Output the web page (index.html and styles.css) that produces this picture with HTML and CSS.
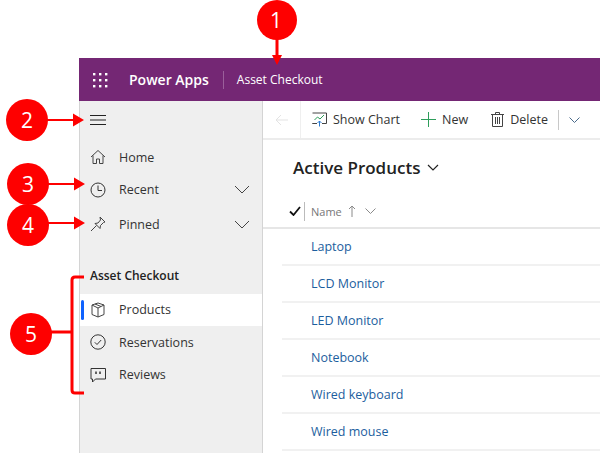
FILE: index.html
```html
<!DOCTYPE html>
<html lang="en">
<head>
    <meta charset="UTF-8">
    <title>Asset Checkout</title>
    <link rel="stylesheet" href="styles.css">
</head>
<body>
    <div class="page">
        <div class="app">
            <header class="topbar">
                <svg class="waffle" width="16" height="16" viewBox="0 0 16 16" fill="#fff">
                    <rect x="1" y="1" width="2.4" height="2.4"/><rect x="7" y="1" width="2.4" height="2.4"/><rect x="13" y="1" width="2.4" height="2.4"/>
                    <rect x="1" y="7" width="2.4" height="2.4"/><rect x="7" y="7" width="2.4" height="2.4"/><rect x="13" y="7" width="2.4" height="2.4"/>
                    <rect x="1" y="13" width="2.4" height="2.4"/><rect x="7" y="13" width="2.4" height="2.4"/><rect x="13" y="13" width="2.4" height="2.4"/>
                </svg>
                <span class="brand">Power Apps</span>
                <span class="appname">Asset Checkout</span>
            </header>
            <div class="main">
                <nav class="sidebar">
                    <div class="burger">
                        <svg width="16" height="12" viewBox="0 0 16 12" stroke="#222" fill="none"><path d="M0 1.5h16M0 6h16M0 10.5h16"/></svg>
                    </div>
                    <a class="navrow home">
                        <svg class="navicon" width="16" height="16" viewBox="0 0 16 16" fill="none" stroke="#444"><path d="M1 8l7-6.5L15 8M3 6.500V14.500h3.500V10h3v4.500H13V6.500"/></svg>
                        <span>Home</span>
                    </a>
                    <a class="navrow recent">
                        <svg class="navicon" width="16" height="16" viewBox="0 0 16 16" fill="none" stroke="#333"><circle cx="8" cy="8" r="7"/><path d="M8 3.500V8.500h4"/></svg>
                        <span>Recent</span>
                        <svg class="chevron" width="16" height="9" viewBox="0 0 16 9" fill="none" stroke="#444"><path d="M1 1l7 7 7-7"/></svg>
                    </a>
                    <a class="navrow pinned">
                        <svg class="navicon" width="16" height="16" viewBox="0 0 16 16" fill="none" stroke="#444"><path d="M10 1l5 5-1.500.5-3 3-.5 3L5 7.500l3-.5 2.500-3zM6.500 9.500L1 15"/></svg>
                        <span>Pinned</span>
                        <svg class="chevron" width="16" height="9" viewBox="0 0 16 9" fill="none" stroke="#444"><path d="M1 1l7 7 7-7"/></svg>
                    </a>
                    <div class="group">Asset Checkout</div>
                    <a class="navrow current">
                        <svg class="navicon" width="16" height="16" viewBox="0 0 16 16" fill="none" stroke="#444"><path d="M8 1l6 2v9.500L8 15l-6-2.500V3zM2 3l6 3 6-3M8 6v9M5 2l6 2.500"/></svg>
                        <span>Products</span>
                    </a>
                    <a class="navrow">
                        <svg class="navicon" width="16" height="16" viewBox="0 0 16 16" fill="none" stroke="#333"><circle cx="8" cy="8" r="7.200"/><path d="M4.800 8.300l2.200 2.200 4.200-4.500"/></svg>
                        <span>Reservations</span>
                    </a>
                    <a class="navrow">
                        <svg class="navicon" width="16" height="16" viewBox="0 0 16 16" fill="none" stroke="#333"><path d="M1 1.500h14.500v10.500H5.500L2.500 15v-3H1z"/><path d="M6 4.500v2.500M10 4.500v2.500" stroke-width="1.500"/></svg>
                        <span>Reviews</span>
                    </a>
                </nav>
                <section class="content">
                    <div class="toolbar">
                        <div class="backbox">
                            <svg width="14" height="12" viewBox="0 0 14 12" fill="none" stroke="#e3e3e3"><path d="M13 6H1M6 1L1 6l5 5"/></svg>
                        </div>
                        <button class="cmd chart">
                            <svg width="15" height="15" viewBox="0 0 15 15" fill="none">
                                <path d="M.5 1h14v10.500H10M5 11.500H.5z" stroke="#444"/>
                                <path d="M2.500 8l3-3 2.500 2 4-4" stroke="#2e9e5b"/>
                                <path d="M7.500 14.500V9M5.500 11l2-2 2 2" stroke="#2b7cd3"/>
                            </svg>
                            Show Chart
                        </button>
                        <button class="cmd new">
                            <svg width="15" height="15" viewBox="0 0 15 15" fill="none" stroke="#2e9e5b"><path d="M7.500 0v15M0 7.500h15"/></svg>
                            New
                        </button>
                        <button class="cmd delete">
                            <svg width="13" height="15" viewBox="0 0 13 15" fill="none" stroke="#444"><path d="M0 2.500h13M4.500 2.500V.5h4v2M1.500 2.500v12h10v-12M4.500 5v7M6.500 5v7M8.500 5v7"/></svg>
                            Delete
                        </button>
                        <span class="more">
                            <svg width="11" height="6" viewBox="0 0 11 6" fill="none" stroke="#4a6a8a"><path d="M.5.500l5 5 5-5"/></svg>
                        </span>
                    </div>
                    <div class="viewtitle">
                        <h1>Active Products</h1>
                        <svg width="12" height="7" viewBox="0 0 12 7" fill="none" stroke="#222" stroke-width="1.200"><path d="M1 1l5 5 5-5"/></svg>
                    </div>
                    <div class="gridhead">
                        <svg class="tick" width="12" height="10" viewBox="0 0 12 10" fill="none" stroke="#111" stroke-width="1.800"><path d="M1 5.500l3.500 3.500L11 1"/></svg>
                        <span class="headcell">Name</span>
                        <svg width="8" height="12" viewBox="0 0 8 12" fill="none" stroke="#8a8a8a"><path d="M4 12V1M1 4l3-3 3 3"/></svg>
                        <svg class="headchev" width="11" height="6" viewBox="0 0 11 6" fill="none" stroke="#8a8a8a"><path d="M.5.500l5 5 5-5"/></svg>
                    </div>
                    <ul class="rows">
                        <li><a>Laptop</a></li>
                        <li><a>LCD Monitor</a></li>
                        <li><a>LED Monitor</a></li>
                        <li><a>Notebook</a></li>
                        <li><a>Wired keyboard</a></li>
                        <li><a>Wired mouse</a></li>
                    </ul>
                </section>
            </div>
        </div>

        <!-- callouts on top of the screenshot -->
        <svg class="callouts" width="600" height="453" viewBox="0 0 600 453">
            <g fill="#fe0000">
                <circle cx="277" cy="20" r="20"/>
                <circle cx="27" cy="120" r="21"/>
                <circle cx="28" cy="184" r="21"/>
                <circle cx="28" cy="225" r="21"/>
                <circle cx="31" cy="334" r="21"/>
                <path d="M275.500 38h3v17h3.500l-5 10-5-10h3.500z"/>
                <path d="M47 119h26v-5.500l11 6.500-11 6.500V121H47z"/>
                <path d="M47 183h27v-5.500l11 6.500-11 6.500V185H47z"/>
                <path d="M47 222h27v-5.500l11 6.500-11 6.500V224H47z"/>
            </g>
            <path d="M84 277H75q-3 0-3 3v110q0 3 3 3H84M50 332H72" fill="none" stroke="#fe0000" stroke-width="3"/>
            <g class="num" fill="#fff" text-anchor="middle">
                <text x="276" y="28">1</text>
                <text x="27" y="128">2</text>
                <text x="28" y="192">3</text>
                <text x="28" y="233">4</text>
                <text x="31" y="342">5</text>
            </g>
        </svg>
    </div>
</body>
</html>
```

FILE: styles.css
```css
* {
    box-sizing: border-box;
}
html, body {
    margin: 0;
    background: #ffffff;
}
body {
    font-family: "Open Sans", "Noto Sans", sans-serif;
    font-size: 12.5px;
    color: #333;
}
.page {
    position: relative;
    width: 600px;
    height: 453px;
    overflow: hidden;
    padding: 58px 0 0 79px;
}
.app {
    height: 395px;
    display: flex;
    flex-direction: column;
}
.topbar {
    height: 43px;
    flex: none;
    background: #742774;
    color: #fff;
    display: flex;
    align-items: center;
    padding-left: 13px;
}
.brand {
    font-size: 14px;
    font-weight: 600;
    margin-left: 21px;
    padding-right: 14px;
    border-right: 1px solid #9a5f9a;
    line-height: 18px;
}
.appname {
    font-size: 12px;
    margin-left: 13px;
}
.main {
    flex: 1;
    display: flex;
    min-height: 0;
}

/* sidebar */
.sidebar {
    width: 184px;
    flex: none;
    background: #efefef;
    border-left: 1px solid #d4d4d4;
    border-right: 1px solid #d4d4d4;
}
.burger {
    height: 38px;
    padding-left: 10px;
    display: flex;
    align-items: center;
}
.navrow {
    height: 32.5px;
    display: flex;
    align-items: center;
    padding-left: 10px;
    position: relative;
}
.navrow span {
    margin-left: 13px;
}
.navicon {
    flex: none;
}
.chevron {
    margin-left: auto;
    margin-right: 12px;
}
.home {
    margin-top: 2px;
}
.pinned {
    margin-top: 2px;
}
.group {
    font-weight: 600;
    font-size: 12px;
    color: #222;
    height: 53px;
    padding: 26px 0 0 10px;
    line-height: 18px;
}
.navrow.current {
    background: #fff;
}
.current::before {
    content: "";
    position: absolute;
    left: 1px;
    top: 6px;
    width: 3px;
    height: 20px;
    background: #0f62fe;
    border-radius: 2px;
}

/* right part */
.content {
    flex: 1;
    min-width: 0;
}
.toolbar {
    height: 39px;
    border-bottom: 2px solid #ececec;
    display: flex;
    align-items: center;
}
.backbox {
    width: 38px;
    height: 37px;
    border-right: 1px solid #efefef;
    display: flex;
    align-items: center;
    justify-content: center;
}
.cmd {
    font: inherit;
    color: #333;
    background: none;
    border: 0;
    padding: 0;
    display: flex;
    align-items: center;
    gap: 6px;
}
.chart {
    margin-left: 11px;
}
.new {
    margin-left: 21px;
}
.delete {
    margin-left: 23px;
}
.more {
    margin-left: 10px;
    height: 20px;
    border-left: 1px solid #c8c8c8;
    padding-left: 10px;
    display: flex;
    align-items: center;
}
.viewtitle {
    height: 55px;
    display: flex;
    align-items: center;
    gap: 7px;
    padding: 0 0 0 30px;
}
h1 {
    margin: 0;
    font-size: 17px;
    font-weight: 600;
    color: #222;
}
.gridhead {
    height: 34px;
    padding-left: 26px;
    border-bottom: 2px solid #e6e6e6;
    display: flex;
    align-items: center;
}
.tick {
    margin-right: 3px;
}
.headcell {
    font-size: 11px;
    color: #777;
    border-left: 1px solid #bbb;
    padding: 2px 0 2px 6px;
    margin-right: 6px;
}
.headchev {
    margin-left: 9px;
}
.rows {
    list-style: none;
    margin: 0 0 0 19px;
    padding: 0;
}
.rows li {
    height: 37px;
    border-bottom: 2px solid #f1f1f1;
    padding-left: 29px;
    display: flex;
    align-items: center;
}
.rows a {
    color: #1c5e9e;
}

/* callouts */
.callouts {
    position: absolute;
    left: 0;
    top: 0;
}
.num {
    font-size: 21px;
}
```
